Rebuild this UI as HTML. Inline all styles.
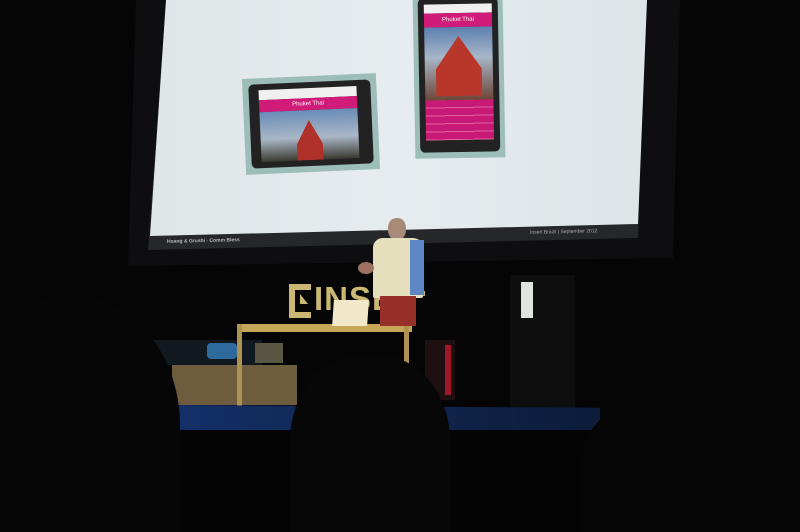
<!DOCTYPE html>
<html><head><style>
html,body{margin:0;width:800px;height:532px;overflow:hidden;background:#050505;position:relative;font-family:"Liberation Sans",sans-serif}
div{position:absolute;box-sizing:border-box}
</style></head><body>
<div style="left:128px;top:0;width:556px;height:266px;background:#0e0e10;clip-path:polygon(8px 0,552px 0,545px 258px,0 266px)"></div>
<div style="left:148px;top:0;width:500px;height:250px;background:#25272b;clip-path:polygon(18px 0,498px 0,490px 238px,0 250px)"></div>
<div style="left:150px;top:0;width:498px;height:236px;background:linear-gradient(90deg,#dfe6e8,#e6ecef 50%,#dde5e8);clip-path:polygon(16px 0,497px 0,488px 224px,0 236px)"></div>
<div style="left:167px;top:238px;font-size:5px;color:#bbb;font-weight:bold;transform:rotate(-1.3deg)">Hoang &amp; Grushi · Comm Bless</div>
<div style="left:530px;top:229px;font-size:5px;color:#aaa;transform:rotate(-1.3deg)">Insert Brazil | September 2012</div>
<!-- landscape phone -->
<div style="left:244px;top:76px;width:134px;height:96px;background:#9dbdb8;transform:rotate(-2.5deg)">
 <div style="left:6px;top:6px;width:122px;height:84px;background:#222;border-radius:5px"></div>
 <div style="left:16px;top:12px;width:98px;height:10px;background:#f0f0f0"></div>
 <div style="left:16px;top:22px;width:98px;height:12px;background:#d01c78;color:#fff;font-size:6px;text-align:center;line-height:12px">Phuket Thai</div>
 <div style="left:16px;top:34px;width:98px;height:50px;background:linear-gradient(#6a8cb8,#aab7c6 55%,#3a3a30)"></div>
 <div style="left:52px;top:44px;width:26px;height:40px;background:#b0302a;clip-path:polygon(50% 0,100% 60%,100% 100%,0 100%,0 60%)"></div>
</div>
<!-- portrait phone -->
<div style="left:414px;top:-4px;width:90px;height:162px;background:#9dbdb8;transform:rotate(-1deg)">
 <div style="left:5px;top:2px;width:80px;height:154px;background:#222;border-radius:5px"></div>
 <div style="left:11px;top:8px;width:68px;height:9px;background:#f0f0f0"></div>
 <div style="left:11px;top:17px;width:68px;height:14px;background:#d01c78;color:#fff;font-size:6px;text-align:center;line-height:14px">Phuket Thai</div>
 <div style="left:11px;top:31px;width:68px;height:75px;background:linear-gradient(#5d80b0,#a7b6c8 40%,#6a4030)"></div>
 <div style="left:22px;top:40px;width:46px;height:60px;background:#b8362a;clip-path:polygon(50% 0,100% 55%,100% 100%,0 100%,0 55%)"></div>
 <div style="left:11px;top:104px;width:68px;height:40px;background:repeating-linear-gradient(#c81a74 0 7px,#e060a0 7px 8px)"></div>
</div>
<!-- stage -->
<div style="left:289px;top:284px;width:22px;height:34px;border:6px solid #c9b772;border-right:none"></div>
<div style="left:300px;top:294px;width:8px;height:10px;background:#c9b772;clip-path:polygon(0 0,100% 100%,0 100%)"></div>
<div style="left:314px;top:280px;font-size:33px;font-weight:bold;color:#c9b772;letter-spacing:1px">INSE</div>
<div style="left:403px;top:291px;width:22px;height:5px;background:#c9b772"></div>
<div style="left:510px;top:275px;width:65px;height:145px;background:#0e0e0e"></div>
<div style="left:521px;top:282px;width:12px;height:36px;background:#dfe5dd"></div>
<!-- sofa -->
<div style="left:152px;top:340px;width:110px;height:25px;background:#101820"></div>
<div style="left:172px;top:365px;width:125px;height:40px;background:#6e5c3e"></div>
<div style="left:207px;top:343px;width:30px;height:16px;background:#2e6a9c;border-radius:4px"></div>
<div style="left:255px;top:343px;width:28px;height:20px;background:#5a5644"></div>
<!-- desk -->
<div style="left:237px;top:324px;width:175px;height:8px;background:#c7a65a"></div>
<div style="left:237px;top:324px;width:5px;height:88px;background:#b09250"></div>
<div style="left:404px;top:324px;width:5px;height:50px;background:#b09250"></div>
<div style="left:333px;top:300px;width:35px;height:26px;background:#f0e8c8;transform:skewX(-4deg)"></div>
<!-- speaker -->
<div style="left:388px;top:218px;width:18px;height:22px;background:#a88a78;border-radius:45%"></div>
<div style="left:373px;top:238px;width:50px;height:60px;background:#e6dfbe;border-radius:10px 10px 2px 2px"></div>
<div style="left:410px;top:240px;width:14px;height:55px;background:#5d86c4"></div>
<div style="left:380px;top:296px;width:36px;height:30px;background:#98302a"></div>
<div style="left:358px;top:262px;width:16px;height:12px;background:#a07060;border-radius:50%"></div>
<div style="left:425px;top:340px;width:30px;height:60px;background:#1e1010"></div>
<div style="left:445px;top:345px;width:6px;height:50px;background:#a01828"></div>
<!-- floor -->
<div style="left:170px;top:405px;width:430px;height:35px;background:linear-gradient(90deg,#14306a,#102650 50%,#0c1c3a);clip-path:polygon(0 0,100% 8%,100% 100%,0 70%)"></div>
<!-- audience silhouettes -->
<div style="left:0;top:430px;width:800px;height:102px;background:#040404"></div>
<div style="left:-40px;top:295px;width:220px;height:260px;background:#060606;border-radius:50% 50% 0 0"></div>
<div style="left:290px;top:355px;width:160px;height:190px;background:#080707;border-radius:45% 45% 0 0"></div>
<div style="left:580px;top:380px;width:260px;height:170px;background:#050505;border-radius:50% 50% 0 0"></div>
</body></html>
